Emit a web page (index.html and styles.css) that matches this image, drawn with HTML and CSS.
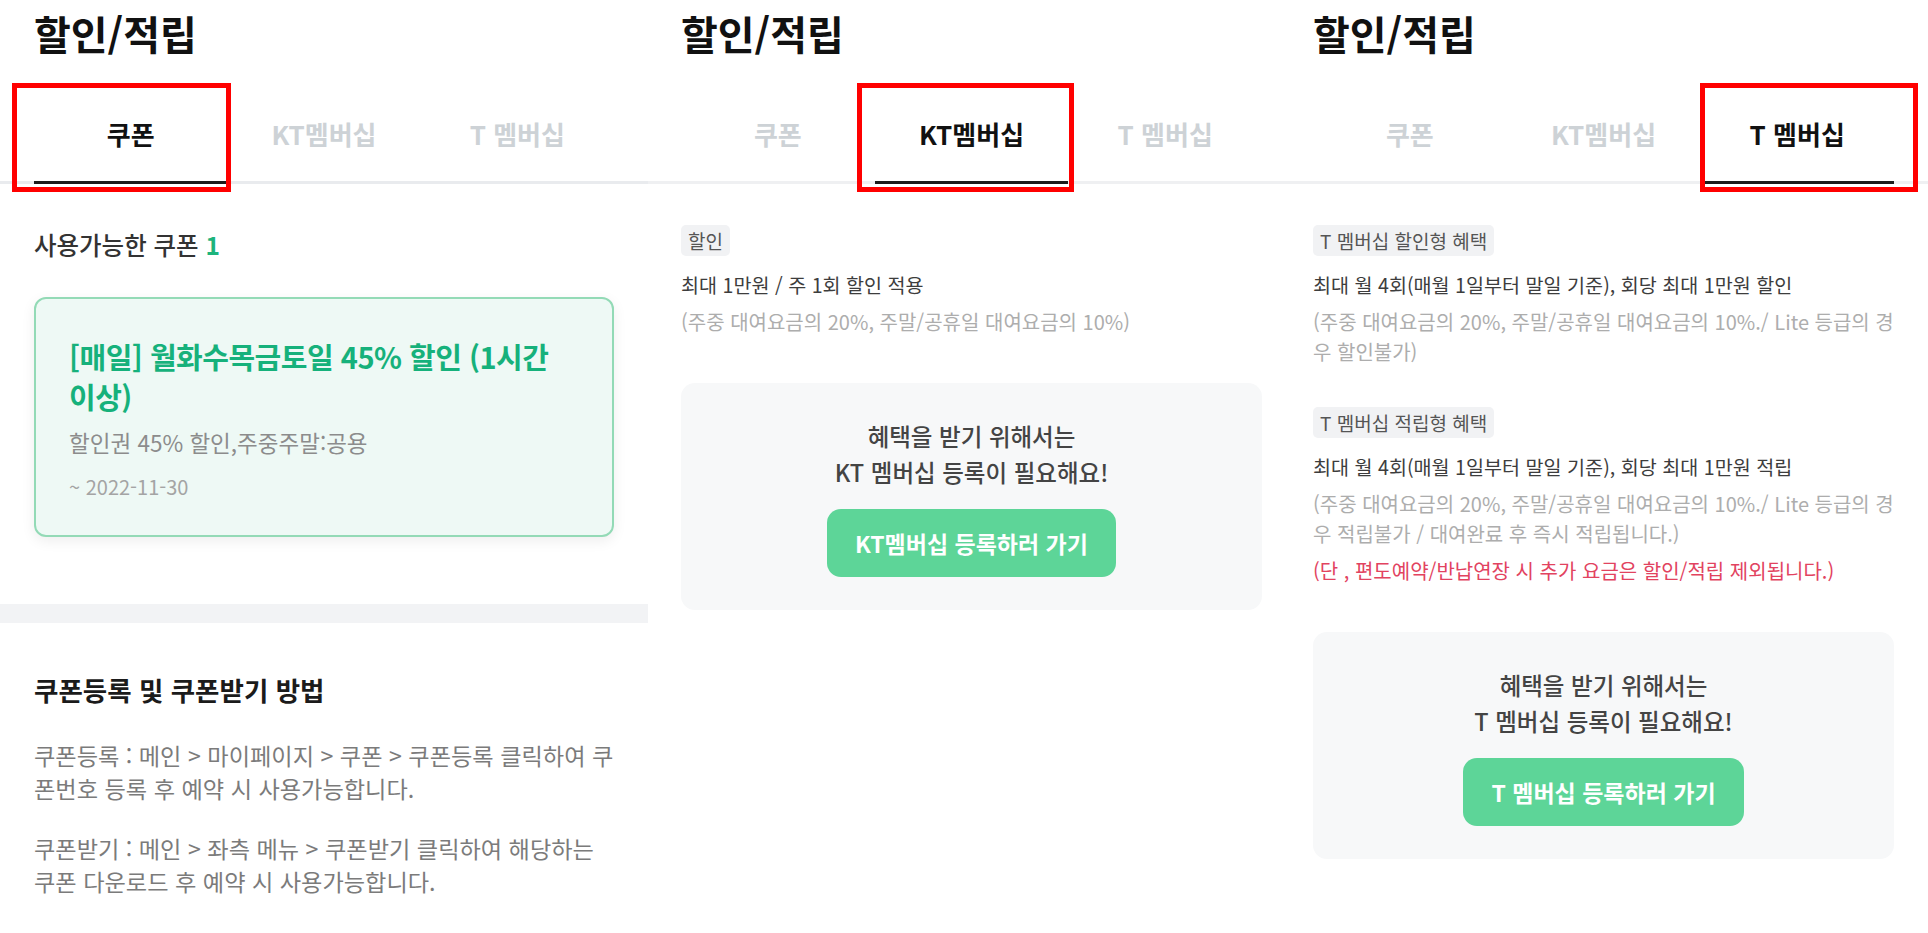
FILE: index.html
```html
<!DOCTYPE html>
<html lang="ko">
<head>
<meta charset="utf-8">
<title>할인/적립</title>
<link rel="stylesheet" href="styles.css">
</head>
<body>
<main class="screen">
  <section class="panel p1">
    <h1 class="title">할인/적립</h1>
    <nav class="tabs">
      <div class="tab active">쿠폰</div>
      <div class="tab">KT멤버십</div>
      <div class="tab">T 멤버십</div>
    </nav>
    <p class="count">사용가능한 쿠폰 <b>1</b></p>
    <article class="coupon">
      <h2 class="coupon-title">[매일] 월화수목금토일 45% 할인 (1시간 이상)</h2>
      <p class="coupon-desc">할인권 45% 할인,주중주말:공용</p>
      <p class="coupon-date">~ 2022-11-30</p>
    </article>
    <div class="band"></div>
    <h3 class="guide-title">쿠폰등록 및 쿠폰받기 방법</h3>
    <p class="guide-text">쿠폰등록 : 메인 &gt; 마이페이지 &gt; 쿠폰 &gt; 쿠폰등록 클릭하여 쿠폰번호 등록 후 예약 시 사용가능합니다.</p>
    <p class="guide-text">쿠폰받기 : 메인 &gt; 좌측 메뉴 &gt; 쿠폰받기 클릭하여 해당하는 쿠폰 다운로드 후 예약 시 사용가능합니다.</p>
    <div class="mark mark-1"></div>
  </section>

  <section class="panel p2">
    <h1 class="title">할인/적립</h1>
    <nav class="tabs">
      <div class="tab">쿠폰</div>
      <div class="tab active">KT멤버십</div>
      <div class="tab">T 멤버십</div>
    </nav>
    <div class="benefits">
      <div class="benefit">
        <span class="badge">할인</span>
        <p class="benefit-main">최대 1만원 / 주 1회 할인 적용</p>
        <p class="benefit-note">(주중 대여요금의 20%, 주말/공휴일 대여요금의 10%)</p>
      </div>
    </div>
    <div class="join">
      <p class="join-text">혜택을 받기 위해서는<br>KT 멤버십 등록이 필요해요!</p>
      <a class="join-btn">KT멤버십 등록하러 가기</a>
    </div>
    <div class="mark mark-2"></div>
  </section>

  <section class="panel p3">
    <h1 class="title">할인/적립</h1>
    <nav class="tabs">
      <div class="tab">쿠폰</div>
      <div class="tab">KT멤버십</div>
      <div class="tab active">T 멤버십</div>
    </nav>
    <div class="benefits">
      <div class="benefit">
        <span class="badge">T 멤버십 할인형 혜택</span>
        <p class="benefit-main">최대 월 4회(매월 1일부터 말일 기준), 회당 최대 1만원 할인</p>
        <p class="benefit-note">(주중 대여요금의 20%, 주말/공휴일 대여요금의 10%./ Lite 등급의 경우 할인불가)</p>
      </div>
      <div class="benefit">
        <span class="badge">T 멤버십 적립형 혜택</span>
        <p class="benefit-main">최대 월 4회(매월 1일부터 말일 기준), 회당 최대 1만원 적립</p>
        <p class="benefit-note">(주중 대여요금의 20%, 주말/공휴일 대여요금의 10%./ Lite 등급의 경우 적립불가 / 대여완료 후 즉시 적립됩니다.)</p>
        <p class="benefit-warn">(단 , 편도예약/반납연장 시 추가 요금은 할인/적립 제외됩니다.)</p>
      </div>
    </div>
    <div class="join">
      <p class="join-text">혜택을 받기 위해서는<br>T 멤버십 등록이 필요해요!</p>
      <a class="join-btn">T 멤버십 등록하러 가기</a>
    </div>
    <div class="mark mark-3"></div>
  </section>
</main>
</body>
</html>
```

FILE: styles.css
```css
* {
  box-sizing: border-box;
  margin: 0;
  padding: 0;
}

html,
body {
  background: #ffffff;
}

body {
  width: 1928px;
  height: 933px;
  overflow: hidden;
  font-family: "Noto Sans CJK KR", "Noto Sans", sans-serif;
  color: #333333;
}

.screen {
  display: flex;
  height: 933px;
}

.panel {
  --pl: 34px;
  --pr: 34px;
  --line: #eff0f2;
  position: relative;
  flex: none;
  padding: 0 var(--pr) 0 var(--pl);
}

.p1 {
  width: 648px;
  --line: #e9ebee;
}

.p2 {
  width: 631px;
  --pl: 33px;
  --pr: 17px;
}

.p3 {
  width: 649px;
}

/* header */
.title {
  margin-top: 10px;
  font-size: 40px;
  line-height: 46px;
  font-weight: 700;
  color: #111111;
}

.tabs {
  display: flex;
  margin: 32px calc(-1 * var(--pr)) 0 calc(-1 * var(--pl));
  padding: 0 var(--pr) 0 var(--pl);
  border-bottom: 3px solid var(--line);
}

.tab {
  flex: 1;
  height: 96px;
  margin-bottom: -3px;
  border-bottom: 3px solid transparent;
  line-height: 92px;
  text-align: center;
  font-size: 26px;
  font-weight: 700;
  color: #cdd2d6;
}

.tab.active {
  color: #111111;
  border-bottom-color: #1c1c1c;
}

/* coupon tab */
.count {
  margin-top: 45px;
  font-size: 24.5px;
  line-height: 32px;
  font-weight: 500;
  color: #333333;
}

.count b {
  color: #1db47c;
  font-weight: 700;
}

.coupon {
  margin-top: 36px;
  padding: 37px 33px 34px;
  border: 2px solid #93dab6;
  border-radius: 12px;
  background: #eef9f5;
  box-shadow: 0 4px 14px rgba(0, 0, 0, 0.07);
}

.coupon-title {
  font-size: 29px;
  line-height: 40px;
  font-weight: 700;
  letter-spacing: -0.5px;
  color: #16b17b;
}

.coupon-desc {
  margin-top: 11px;
  font-size: 22.5px;
  line-height: 30px;
  color: #8c8c8c;
}

.coupon-date {
  margin-top: 16px;
  font-size: 20px;
  line-height: 28px;
  color: #a4a4a4;
}

.band {
  height: 19px;
  margin: 67px calc(-1 * var(--pr)) 0 calc(-1 * var(--pl));
  background: #f2f3f5;
}

.guide-title {
  margin-top: 50px;
  font-size: 26.5px;
  line-height: 34px;
  font-weight: 700;
  color: #1b1b1b;
}

.guide-text {
  margin-top: 32px;
  font-size: 23.2px;
  line-height: 33px;
  color: #7b7b7b;
}

.guide-text + .guide-text {
  margin-top: 27px;
}

/* membership tabs */
.benefits {
  padding-top: 41px;
}

.benefit + .benefit {
  margin-top: 40px;
}

.badge {
  display: block;
  width: fit-content;
  height: 31px;
  padding: 0 7px;
  border-radius: 5px;
  background: #f1f2f4;
  line-height: 31px;
  font-size: 19px;
  color: #555555;
}

.benefit-main {
  margin-top: 15px;
  font-size: 19.6px;
  line-height: 28px;
  color: #3d3d3d;
}

.benefit-note {
  margin-top: 8px;
  font-size: 20px;
  line-height: 30px;
  color: #adadad;
}

.benefit-warn {
  margin-top: 7px;
  font-size: 20px;
  line-height: 30px;
  color: #e2435f;
}

.join {
  margin-top: 46px;
  padding: 35px 0 33px;
  border-radius: 14px;
  background: #f7f8f9;
  text-align: center;
}

.join-text {
  font-size: 23.5px;
  line-height: 36px;
  font-weight: 500;
  color: #444444;
}

.join-btn {
  display: inline-block;
  height: 68px;
  margin-top: 19px;
  padding: 0 28px;
  border-radius: 14px;
  background: #5dd598;
  line-height: 68px;
  font-size: 23px;
  font-weight: 700;
  color: #ffffff;
}

/* red annotation boxes */
.mark {
  position: absolute;
  top: 83px;
  height: 109px;
  border: 5px solid #ff0000;
}

.mark-1 {
  left: 12px;
  width: 219px;
}

.mark-2 {
  left: 209px;
  width: 217px;
}

.mark-3 {
  left: 421px;
  width: 218px;
}
```
